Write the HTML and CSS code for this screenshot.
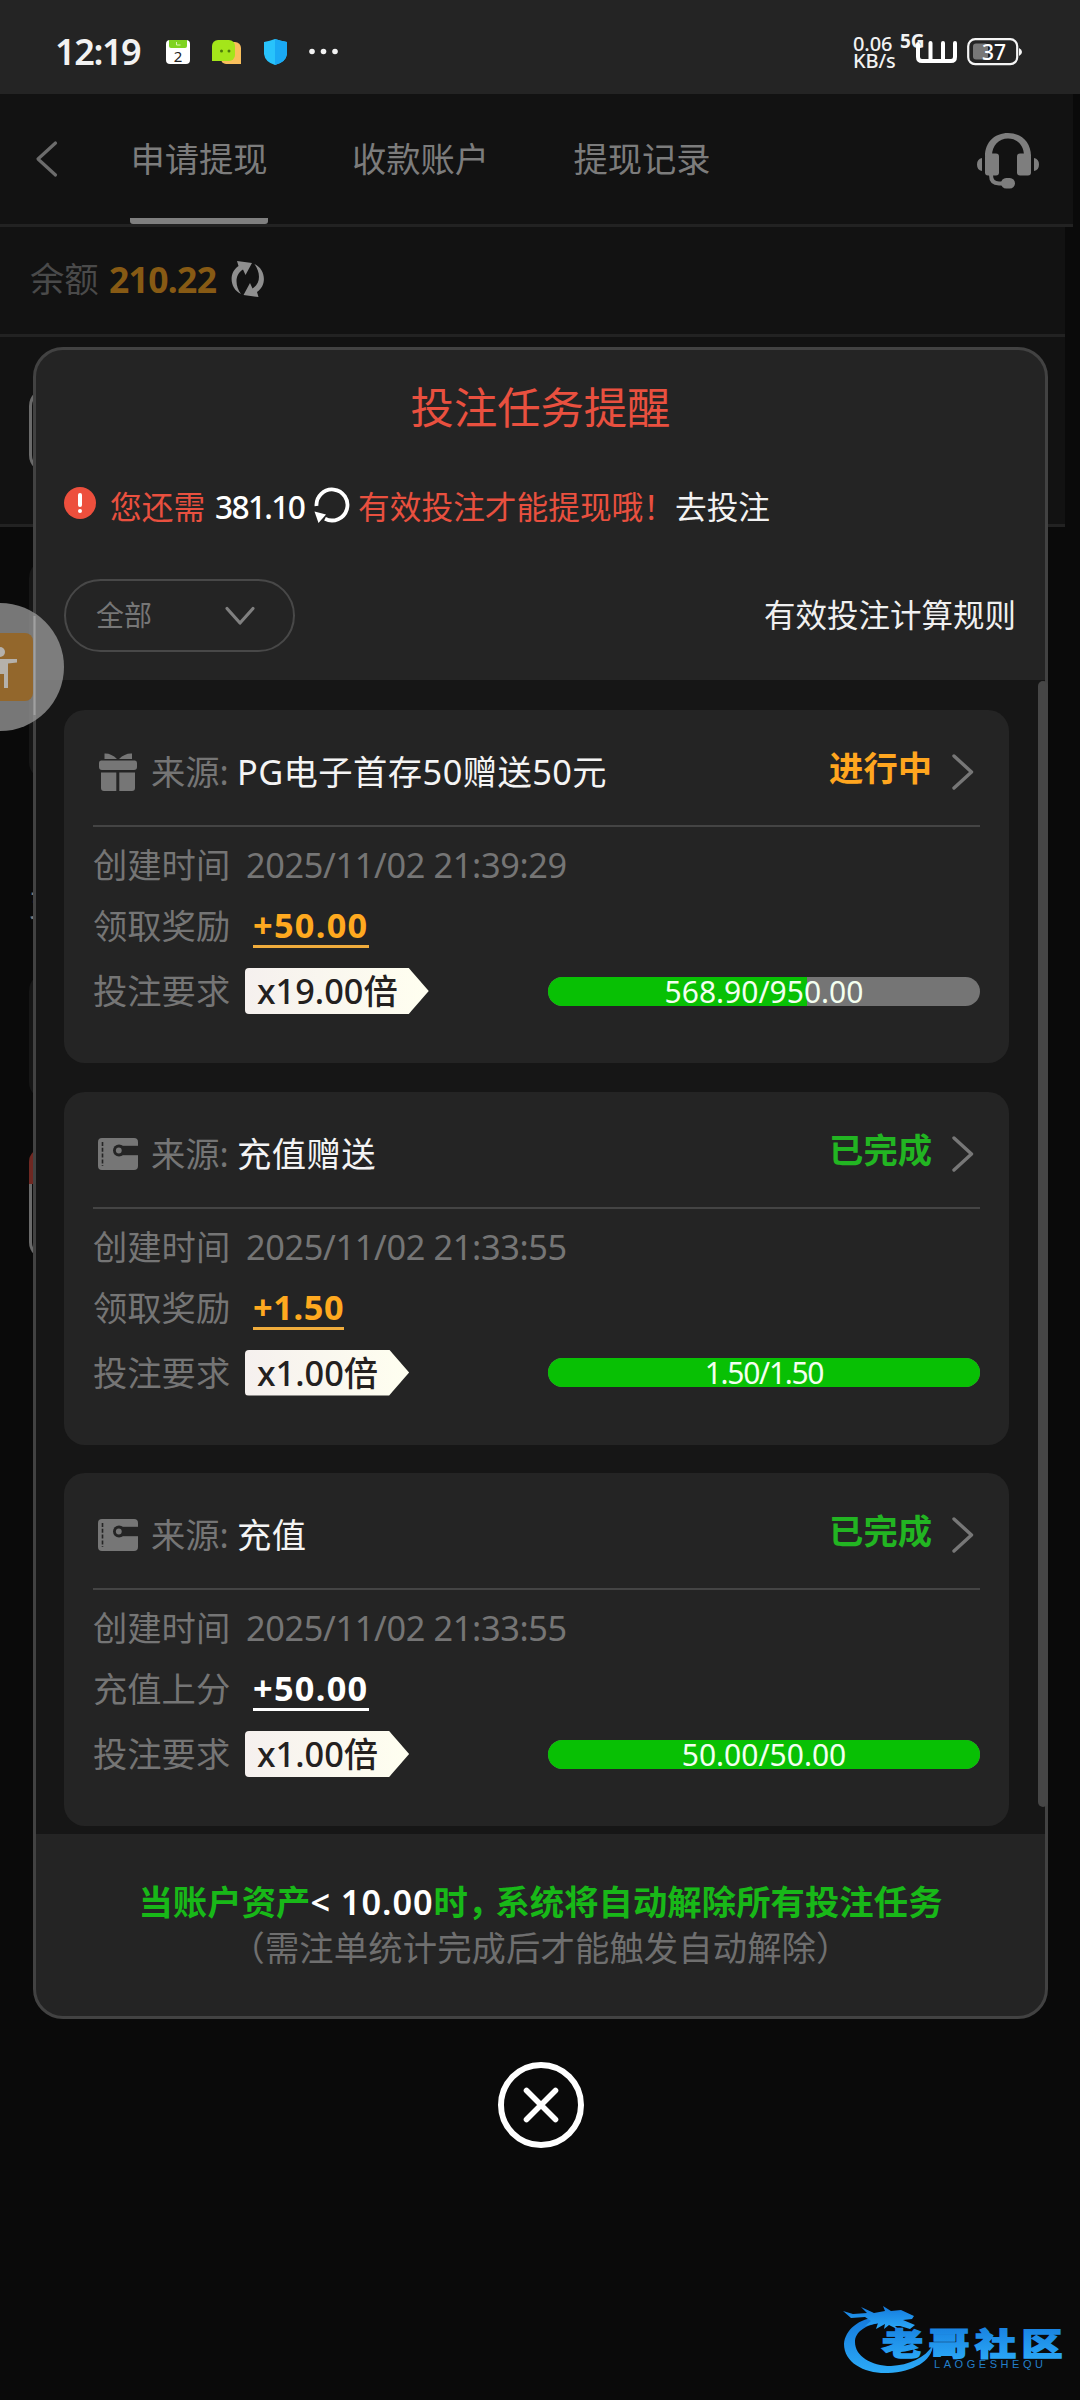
FILE: index.html
```html
<!DOCTYPE html>
<html lang="zh-CN">
<head>
<meta charset="utf-8">
<title>申请提现</title>
<link rel="stylesheet" href="styles.css">
</head>
<body>
<svg width="0" height="0" class="defs" aria-hidden="true">
  <symbol id="chevron" viewBox="0 0 22 36"><path d="M2 2 19.500 18 2 34" fill="none" stroke="currentColor" stroke-width="3.400" stroke-linecap="round" stroke-linejoin="round"/></symbol>
  <symbol id="wallet" viewBox="0 0 40 32">
    <path fill="currentColor" d="M4 0H36a4 4 0 0 1 4 4V8H22a6 6 0 0 0 0 9H40V28a4 4 0 0 1-4 4H4a4 4 0 0 1-4-4V4a4 4 0 0 1 4-4Z"/>
    <path d="M4.500 4V28" stroke="#242424" stroke-width="1.600" stroke-dasharray="4 1.800"/>
    <circle cx="21" cy="12.500" r="6" fill="#242424"/><path d="M21 7.800H40v9.400H21z" fill="#242424"/>
    <circle cx="20.800" cy="12.500" r="2.900" fill="currentColor"/>
  </symbol>
</svg>

<div class="screen">
  <header class="status">
    <span class="clock">12:19</span>
    <svg class="notif" width="180" height="30" viewBox="0 0 180 30">
      <rect x="1" y="2" width="24" height="24" rx="4" fill="#fff"/><path d="M4 2h18v6a2 2 0 0 1-2 2H6a2 2 0 0 1-2-2z" fill="#7fd321"/><path d="M11.500 4v3h4" fill="none" stroke="#d9f5b0" stroke-width="1"/>
      <text x="13" y="23.500" text-anchor="middle" class="notif-day">2</text>
      <path d="M56 4h14a6 6 0 0 1 6 6v16H61a5 5 0 0 1-5-5z" fill="#f9bf5c"/>
      <path d="M53 2h11a6 6 0 0 1 6 6v9a6 6 0 0 1-6 6H47V8a6 6 0 0 1 6-6z" fill="#a4e51a"/>
      <circle cx="56.500" cy="13" r="1.500" fill="#4c7a0a"/><circle cx="64" cy="13" r="1.500" fill="#4c7a0a"/>
      <path d="M99 4q6-1 11-3 6 2 12 3v12q-1 8-12 11-10-3-11-11z" fill="#28c3fb"/><path d="M110 1q6 2 12 3v12q-1 8-12 11z" fill="#1aa9f4"/>
      <g fill="#f2f2f2"><circle cx="147" cy="13.500" r="2.800"/><circle cx="158.500" cy="13.500" r="2.800"/><circle cx="170" cy="13.500" r="2.800"/></g>
    </svg>
    <span class="netspeed">0.06<br>KB/s</span>
    <svg class="signal" width="62" height="34" viewBox="0 0 62 34">
      <text x="0" y="15.500" class="signal-g">5G</text>
      <path d="M18 12V25q0 4 4 4H51q4 0 4-4V11M30.500 11V28M43 11V28" fill="none" stroke="#fff" stroke-width="4" stroke-linecap="round"/>
    </svg>
    <svg class="battery" width="56" height="30" viewBox="0 0 56 30">
      <rect x="1.200" y="2.200" width="49" height="25" rx="7" fill="none" stroke="#f5f5f5" stroke-width="2.200"/>
      <rect x="6" y="6.500" width="15" height="16" rx="3" fill="#777"/>
      <path d="M52 11q3 1.500 3 4t-3 4z" fill="#f5f5f5"/>
      <text x="27" y="22.500" text-anchor="middle" class="battery-n">37</text>
    </svg>
  </header>

  <nav class="topbar">
    <svg class="back" width="24" height="38" viewBox="0 0 24 38"><path d="M21.500 3 4 19 21.500 35" fill="none" stroke="#6c6c6c" stroke-width="3.200" stroke-linecap="round" stroke-linejoin="round"/></svg>
    <div class="tabs">
      <span class="tab active">申请提现</span>
      <span class="tab">收款账户</span>
      <span class="tab">提现记录</span>
    </div>
    <svg class="service" width="62" height="56" viewBox="0 0 62 56" fill="#7e7e7e">
      <path d="M8 23C8 9 18 0 31 0S54 9 54 23H47C47 12 40 5.500 31 5.500S15 12 15 23z"/>
      <rect x="8" y="20.500" width="14" height="22" rx="3"/><rect x="40" y="20.500" width="14" height="22" rx="3"/>
      <path d="M5 25v13q-5-1-5-6.500T5 25zM57 25v13q5-1 5-6.500T57 25z"/>
      <path d="M14 42q0 8.500 8 8.500h8" fill="none" stroke="#7e7e7e" stroke-width="4"/>
      <rect x="24" y="45" width="14" height="10.500" rx="5.200"/>
    </svg>
  </nav>

  <main class="page">
    <section class="balance">
      <span class="balance-label">余额</span>
      <span class="balance-value">210.22</span>
      <svg width="36" height="38" viewBox="0 0 36 38" fill="#8f8f8f">
        <path d="M7 1 22 3 15.500 15 13 9.500C5 14 4.500 25 11 34 0 29-2 13 8.500 6z"/>
        <path d="M28.500 37 13.500 35 20 23 22.500 28.500C30.500 24 31 13 24.500 4 35.500 9 37.500 25 27 32z"/>
      </svg>
    </section>
    <section class="amounts"><div class="ghost-input"></div></section>
    <section class="form">
      <div class="ghost-panel tall"></div>
      <div class="ghost-text">支</div>
      <div class="ghost-panel"></div>
      <div class="ghost-alert"></div>
      <div class="ghost-field"></div>
    </section>
  </main>

  <div class="overlay">
    <section class="modal">
      <div class="modal-head">
        <h1>投注任务提醒</h1>
        <div class="notice">
          <span class="warn"><i></i></span>
          <span class="red">您还需</span>
          <span class="need">381.10</span>
          <svg class="reload" width="36" height="36" viewBox="0 0 36 36"><path d="M2.500 19A15.500 15.500 0 1 1 11 31.800" fill="none" stroke="#fff" stroke-width="3.800"/><path d="M.5 24.500 12 27.500 4.500 36z" fill="#fff"/></svg>
          <span class="red">有效投注才能提现哦！</span>
          <span class="go">去投注</span>
        </div>
        <div class="filters">
          <div class="select"><span>全部</span><svg width="32" height="20" viewBox="0 0 32 20"><path d="M3 2.500 16 17 29 2.500" fill="none" stroke="#808080" stroke-width="3.200" stroke-linecap="round" stroke-linejoin="round"/></svg></div>
          <span class="rules">有效投注计算规则</span>
        </div>
      </div>

      <div class="list">
        <article class="card">
          <div class="card-head">
            <svg class="kind" width="40" height="40" viewBox="0 0 40 40" fill="currentColor"><path d="M6.500 7V1.500Q13 1 19 7zM34 7V1.500Q27 1 21 7z"/><path d="M3 8.500h34a2.500 2.500 0 0 1 2 2.500v4a3 3 0 0 1-3 3H4a3 3 0 0 1-3-3v-4a2.500 2.500 0 0 1 2-2.500zM3 20.500h15.300V39H6a3 3 0 0 1-3-3zM21.300 20.500H37V36a3 3 0 0 1-3 3H21.300z"/></svg>
            <span class="src">来源:</span><span class="title">PG电子首存50赠送50元</span>
            <span class="state doing">进行中</span><svg class="more" width="22" height="36"><use href="#chevron"/></svg>
          </div>
          <div class="row"><span class="k">创建时间</span><span class="date">2025/11/02 21:39:29</span></div>
          <div class="row mid"><span class="k">领取奖励</span><span class="money gold">+50.00</span></div>
          <div class="row last"><span class="k">投注要求</span><span class="tag">x19.00倍</span>
            <div class="bar"><div class="fill" style="width:59.880%"></div><span>568.90/950.00</span></div></div>
        </article>

        <article class="card">
          <div class="card-head">
            <svg class="kind" width="40" height="32"><use href="#wallet"/></svg>
            <span class="src">来源:</span><span class="title">充值赠送</span>
            <span class="state done">已完成</span><svg class="more" width="22" height="36"><use href="#chevron"/></svg>
          </div>
          <div class="row"><span class="k">创建时间</span><span class="date">2025/11/02 21:33:55</span></div>
          <div class="row mid"><span class="k">领取奖励</span><span class="money gold short">+1.50</span></div>
          <div class="row last"><span class="k">投注要求</span><span class="tag">x1.00倍</span>
            <div class="bar"><div class="fill" style="width:100%"></div><span class="tight">1.50/1.50</span></div></div>
        </article>

        <article class="card">
          <div class="card-head">
            <svg class="kind" width="40" height="32"><use href="#wallet"/></svg>
            <span class="src">来源:</span><span class="title">充值</span>
            <span class="state done">已完成</span><svg class="more" width="22" height="36"><use href="#chevron"/></svg>
          </div>
          <div class="row"><span class="k">创建时间</span><span class="date">2025/11/02 21:33:55</span></div>
          <div class="row mid"><span class="k">充值上分</span><span class="money">+50.00</span></div>
          <div class="row last"><span class="k">投注要求</span><span class="tag">x1.00倍</span>
            <div class="bar"><div class="fill" style="width:100%"></div><span>50.00/50.00</span></div></div>
        </article>
        <div class="scrollbar"></div>
      </div>

      <footer class="modal-foot">
        <p class="tip">当账户资产<b>&lt; 10.00</b>时<span class="comma">，</span>系统将自动解除所有投注任务</p>
        <p class="sub">（需注单统计完成后才能触发自动解除）</p>
      </footer>
    </section>
    <svg class="close" width="88" height="88" viewBox="0 0 88 88"><circle cx="44" cy="44" r="40" fill="none" stroke="#fff" stroke-width="6"/><path d="M29.500 29.500 58.500 58.500M58.500 29.500 29.500 58.500" stroke="#fff" stroke-width="5.600" stroke-linecap="round"/></svg>
  </div>

  <svg class="float" width="65" height="130" viewBox="0 0 65 130">
    <circle cx="0" cy="65" r="64" fill="#9a9a9a" fill-opacity=".76"/>
    <rect x="-33" y="31" width="66" height="68" rx="8" fill="#93672c"/>
    <path d="M34.500 14V113" stroke="#a0a0a0" stroke-width="2"/>
    <g fill="#b5b1ab"><circle cx="0" cy="50" r="5"/><path d="M-17 57H17v3.500L8 61.500V86H4V72H-4V86H-8V61.500L-17 60z"/></g>
  </svg>

  <svg class="mark" width="240" height="80" viewBox="0 0 240 80">
    <defs><linearGradient id="blue" x1="0" y1="0" x2="0" y2="1"><stop offset="0" stop-color="#1479dc"/><stop offset="1" stop-color="#2cabf8"/></linearGradient></defs>
    <path fill="url(#blue)" d="M37 12C18 13 4 25 3 39 3 58 24 69 47 68 72 67 91 56 92 40 84 53 68 60 50 61 30 61 14 51 14 37 14 27 25 19 41 18z"/>
    <path fill="url(#blue)" d="M2 6 12 9 26 8 20 2 33 8 44 6 42 1 50 6 60 5 73 11 71 14 62 15 74 20 69 24 59 21 54 21 58 25 48 20 43 24 44 19 35 24 37 18 24 21 30 16 24 12 10 13z"/>
    <text class="mark-cn" fill="url(#blue)" stroke="url(#blue)" transform="translate(41 49.500) scale(1 .76)">老哥社区</text>
    <text class="mark-en" x="93" y="63" textLength="109">LAOGESHEQU</text>
  </svg>
</div>
</body>
</html>
```
FILE: styles.css
```css
* { box-sizing: border-box; }
body {
  margin: 0;
  background: #0a0a0a;
  font-family: "Noto Sans", "Noto Sans CJK SC", sans-serif;
  font-size: 34.300px;
  line-height: 1.200;
}
.defs { position: absolute; }
.screen { position: relative; width: 1080px; height: 2400px; overflow: hidden; background: #0a0a0a; }
svg { display: block; flex: none; }
span { white-space: nowrap; }

/* status bar */
.status { display: flex; align-items: center; height: 94px; padding: 9px 0 0 55px; background: #242424; color: #f2f2f2; }
.clock { width: 109px; font-size: 36px; font-weight: 600; line-height: 40px; letter-spacing: -1.400px; }
.notif { margin-top: 2px; margin-left: 1px; margin-right: -1px; }
.notif-day { font-size: 15px; fill: #222; }
.netspeed { margin-left: 509px; width: 46px; font-size: 20px; line-height: 17px; letter-spacing: -.1px; font-weight: 500; }
.signal { margin-left: 1px; margin-top: -5px; overflow: visible; }
.signal-g { font-size: 19px; font-weight: 700; fill: #f2f2f2; }
.battery { margin-left: 5px; margin-top: 0; }
.battery-n { font-size: 21px; fill: #fff; font-weight: 500; }

/* tab bar */
.topbar { display: flex; align-items: flex-start; width: 1073px; height: 133px; padding-left: 34px; background: #121212; border-bottom: 3px solid #222; }
.back { margin-top: 46px; }
.tabs { display: flex; gap: 83.500px; margin-left: 72px; }
.tab { width: 138px; height: 130px; padding-top: 44px; text-align: center; color: #7c7c7c; }
.tab.active { border-bottom: 6px solid #7f7f7f; border-radius: 3px; }
.service { margin: 39px 0 0 266px; }

/* page behind the dialog */
.page { width: 1065px; }
.balance { display: flex; align-items: center; height: 110px; padding: 0 0 3px 30px; background: #121212; border-bottom: 3px solid #222; }
.balance-label { color: #4a4a4a; width: 79px; }
.balance-value { width: 121px; color: #875a14; font-weight: 700; font-size: 35.500px; letter-spacing: -.7px; }
.amounts { height: 190px; padding: 51px 29px 0; background: #121212; border-bottom: 3px solid #222; }
.ghost-input { height: 85px; border: 3px solid #6a6a6a; border-radius: 18px; }
.form { padding: 33px 29px 0; }
.ghost-panel { height: 127px; border-radius: 18px; background: #161616; }
.ghost-panel.tall { height: 220px; }
.ghost-text { height: 193px; padding-top: 102px; color: #777; }
.ghost-alert { height: 36px; margin-top: 48px; border-radius: 14px 14px 0 0; background: #6f2822; }
.ghost-field { height: 76px; border: 3px solid #6a6a6a; border-top: 0; border-radius: 0 0 18px 18px; }

/* dialog */
.overlay { position: absolute; inset: 0; display: flex; flex-direction: column; align-items: flex-start; padding: 347px 0 0 33px; }
.modal { width: 1015px; height: 1672px; border: 3px solid #424242; border-radius: 30px; background: #242424; }
.modal-head { height: 330px; padding: 30px 28px 0; }
h1 { margin: 0; font-size: 43.300px; font-weight: 400; line-height: 56px; text-align: center; color: #e9503f; }
.notice { display: flex; align-items: center; height: 44px; margin-top: 49px; font-size: 31.700px; }
.warn { display: flex; justify-content: center; width: 32px; height: 32px; margin: -8px 14px 0 0; padding-top: 6px; border-radius: 50%; background: #ed4f3d; }
.warn i { width: 4px; height: 14px; border-radius: 2px; background: #fff; }
.warn i::after { content: ""; display: block; width: 4px; height: 4px; margin-top: 16px; border-radius: 2px; background: #fff; }
.red { color: #e9503f; }
.need { width: 99px; margin-left: 10px; color: #fff; font-weight: 500; letter-spacing: -1.700px; }
.reload { margin-right: 8px; margin-top: -5px; }
.go { color: #f2f2f2; }
.filters { display: flex; justify-content: space-between; align-items: center; margin-top: 50px; }
.select { display: flex; justify-content: space-between; align-items: center; width: 231px; height: 73px; padding: 0 37px 0 30px; border: 2px solid #484848; border-radius: 37px; font-size: 28px; color: #767676; }
.rules { font-size: 31.500px; color: #f0f0f0; margin: -2px 1px 0 0; }

/* task list */
.list { position: relative; display: flex; flex-direction: column; gap: 28.500px; height: 1154px; padding: 30px 36px 0 28px; background: #161616; }
.card { flex: none; height: 353px; padding: 0 29px; border-radius: 21px; background: #242424; color: #757575; }
.card-head { display: flex; align-items: center; height: 117px; border-bottom: 2px solid #444; margin-bottom: 8px; padding-top: 9px; }
.kind { margin: 0 13px 0 5px; color: #767676; }
.src { width: 86px; }
.title { color: #f4f4f4; letter-spacing: .45px; }
.state { margin: -8px 20px 0 auto; font-weight: 600; }
.doing { color: #ffa61f; }
.done { color: #22b522; }
.more { margin-right: 6px; color: #777; }
.row { display: flex; align-items: center; height: 60px; }
.row.mid { height: 62px; }
.row.last { height: 68px; }
.k { width: 153px; }
.date { letter-spacing: -.35px; }
.money { margin-left: 7px; padding-bottom: 2px; border-bottom: 3px solid #fff; color: #fff; font-weight: 700; line-height: 36px; margin-top: 3px; letter-spacing: 1.300px; }
.gold { color: #ffa91f; border-color: #f0ac3c; }
.short { letter-spacing: .600px; }
.tag { height: 46px; margin-left: -1px; padding: 0 31px 0 12px; border-radius: 4px; background: linear-gradient(90deg, #f5f0ee, #fffff0); color: #24211f; font-weight: 500; line-height: 46px; clip-path: polygon(0 0, calc(100% - 20px) 0, 100% 50%, calc(100% - 20px) 100%, 0 100%); }
.bar { position: relative; width: 432px; height: 29px; margin-left: auto; border-radius: 15px; background: #757575; }
.fill { height: 100%; border-radius: 15px 0 0 15px; background: #08c004; }
.fill[style*="100%"] { border-radius: 15px; }
.bar span { position: absolute; inset: -8px 0; color: #f3fff0; font-size: 30px; line-height: 45px; text-align: center; }
.bar .tight { letter-spacing: -1.300px; }
.scrollbar { position: absolute; right: -3px; top: 1px; width: 10px; height: 1126px; border-radius: 5px; background: #464646; }

.modal-foot { padding-top: 45px; text-align: center; }
.modal-foot p { margin: 0; height: 46px; line-height: 46px; white-space: nowrap; }
.tip { color: #18b818; font-weight: 600; letter-spacing: .1px; }
.tip b { color: #fff; font-weight: 600; letter-spacing: .95px; }
.comma { margin-right: -7px; }
.sub { color: #6f6f6f; letter-spacing: .15px; }
.close { margin: 42px 0 0 464px; }

/* floating accessibility button */
.float { position: absolute; left: 0; top: 602px; }

/* corner mark */
.mark { position: absolute; left: 841px; top: 2305px; }
.mark-cn { font-family: "Noto Sans CJK SC", sans-serif; font-size: 41px; font-weight: 900; letter-spacing: 5.500px; stroke-width: 1.800px; }
.mark-en { font-family: "Liberation Sans", sans-serif; font-size: 11px; fill: #237fc9; }
```
